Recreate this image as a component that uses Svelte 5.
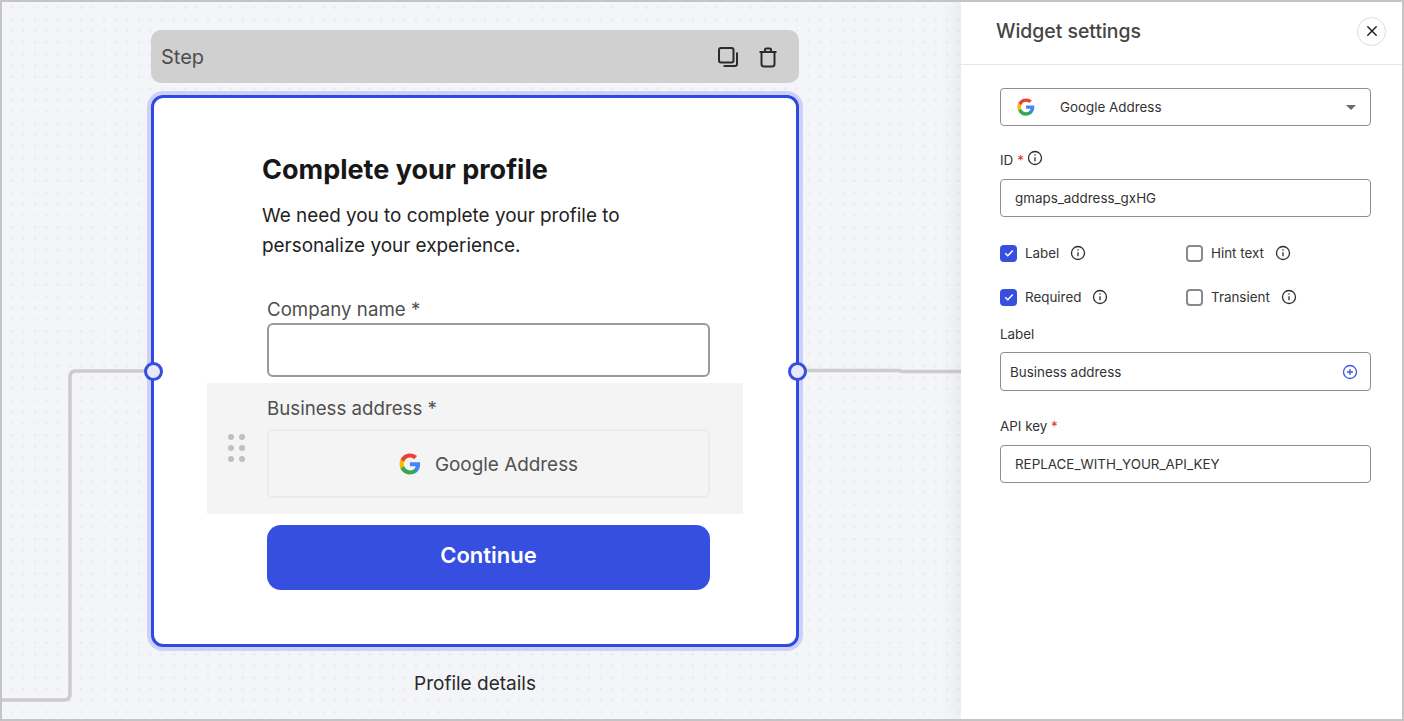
<script lang="ts">
  const checks = [
    { label: 'Label', on: true },
    { label: 'Hint text', on: false },
    { label: 'Required', on: true },
    { label: 'Transient', on: false }
  ];
</script>

{#snippet gLogo(size)}
  <svg class="g" width={size} height={size} viewBox="0 0 48 48">
    <path fill="#4285F4" d="M46.100 24.500c0-1.600-.1-3.100-.4-4.500H24v8.900h12.400c-.5 2.900-2.200 5.300-4.600 6.900v5.700h7.400c4.300-4 6.900-9.900 6.900-17z"/>
    <path fill="#34A853" d="M24 47c6.200 0 11.400-2 15.200-5.500l-7.400-5.700c-2 1.400-4.700 2.200-7.800 2.200-6 0-11.100-4-12.900-9.500H3.500v5.900C7.300 41.900 15 47 24 47z"/>
    <path fill="#FBBC05" d="M11.100 28.500c-.5-1.400-.7-2.900-.7-4.500s.3-3.100.7-4.500v-5.900H3.500C2 16.700 1 20.200 1 24s.9 7.300 2.500 10.400l7.600-5.900z"/>
    <path fill="#EA4335" d="M24 10c3.400 0 6.400 1.200 8.800 3.400l6.600-6.600C35.400 3.100 30.200 1 24 1 15 1 7.300 6.100 3.500 13.600l7.600 5.900C12.900 14 18 10 24 10z"/>
  </svg>
{/snippet}

{#snippet info()}
  <svg class="info" width="16" height="16" viewBox="0 0 16 16" fill="none" stroke="#2e2e2e" stroke-width="1.300">
    <circle cx="8" cy="8" r="6.500"/>
    <path d="M8 7.300v4"/>
    <circle cx="8" cy="5" r=".8" fill="#2e2e2e" stroke="none"/>
  </svg>
{/snippet}

<div class="frame">
  <main class="canvas">
    <svg class="wires" width="960" height="717" fill="none" stroke="#cccccc" stroke-width="3.500">
      <path d="M0 698H62q6 0 6-6V375q0-6 6-6H150"/>
      <path d="M800 368.500H897L900 369.500H960"/>
    </svg>

    <section class="node">
      <header class="step">
        <span>Step</span>
        <div class="step-tools">
          <svg width="24" height="24" viewBox="0 0 24 24" fill="none" stroke="#2b2b2b" stroke-width="2">
            <rect x="3" y="3" width="14.500" height="14.500" rx="2"/>
            <path d="M21 7.500V19q0 2-2 2H7.500" />
          </svg>
          <svg width="24" height="24" viewBox="0 0 24 24" fill="none" stroke="#2b2b2b" stroke-width="2">
            <path d="M3.500 7h17M9 6.500V4.500q0-1 1-1h4q1 0 1 1v2M5.500 7v12q0 2.500 2.500 2.500h8q2.500 0 2.500-2.500V7" />
          </svg>
        </div>
      </header>

      <div class="card">
        <div class="intro">
          <h1>Complete your profile</h1>
          <p>We need you to complete your profile to personalize your experience.</p>
        </div>

        <div class="field">
          <div class="field-label">Company name *</div>
          <div class="text-input"></div>
        </div>

        <div class="widget">
          <div class="grip">
            {#each Array(6) as _}<i></i>{/each}
          </div>
          <div class="field-label">Business address *</div>
          <div class="address">
            {@render gLogo(22)}
            <span>Google Address</span>
          </div>
        </div>

        <button class="continue">Continue</button>
      </div>

      <span class="handle left"></span>
      <span class="handle right"></span>

      <div class="node-name">Profile details</div>
    </section>
  </main>

  <aside class="panel">
    <header class="panel-head">
      <h2>Widget settings</h2>
      <button class="close" aria-label="Close">
        <svg width="12" height="12" viewBox="0 0 12 12" stroke="#222" stroke-width="1.500" stroke-linecap="round">
          <path d="M1.800 1.800l8.400 8.400M10.200 1.800l-8.400 8.400"/>
        </svg>
      </button>
    </header>

    <div class="panel-body">
      <div class="box select">
        {@render gLogo(18)}
        <span>Google Address</span>
        <i class="caret"></i>
      </div>

      <div class="label id-label">ID <em>*</em> {@render info()}</div>
      <div class="box pad15">gmaps_address_gxHG</div>

      <div class="checks">
        {#each checks as c}
          <div class="check">
            {#if c.on}
              <span class="tick on">
                <svg width="12" height="12" viewBox="0 0 12 12" fill="none" stroke="#fff" stroke-width="1.500"><path d="M2.200 6.300l2.600 2.500 5-5.400"/></svg>
              </span>
            {:else}
              <span class="tick"></span>
            {/if}
            <span class="check-text">{c.label}</span>
            {@render info()}
          </div>
        {/each}
      </div>

      <div class="label plain-label">Label</div>
      <div class="box biz">
        <span>Business address</span>
        <svg width="16" height="16" viewBox="0 0 16 16" fill="none" stroke="#3a55e0" stroke-width="1.300">
          <circle cx="8" cy="8" r="6.500"/>
          <path d="M8 5v6M5 8h6"/>
        </svg>
      </div>

      <div class="label api-label">API key <em>*</em></div>
      <div class="box pad15">REPLACE_WITH_YOUR_API_KEY</div>
    </div>
  </aside>
</div>

<style>
  :global(body) {
    margin: 0;
    font-family: Inter, "Liberation Sans", sans-serif;
  }
  .frame {
    display: flex;
    box-sizing: border-box;
    width: 1404px;
    height: 721px;
    border: 2px solid #c4c4c4;
    overflow: hidden;
    background: #fff;
  }
  .canvas {
    position: relative;
    flex: 1;
    background-color: #f4f5f8;
    background-image: radial-gradient(circle, #eaebee 1.1px, transparent 1.7px);
    background-size: 11.55px 11.55px;
    background-position: 4px 0;
  }
  .wires {
    position: absolute;
    left: 0;
    top: 0;
  }
  .node {
    position: absolute;
    left: 149px;
    top: 28px;
    width: 648px;
  }
  .step {
    display: flex;
    align-items: center;
    justify-content: space-between;
    box-sizing: border-box;
    height: 53px;
    padding: 0 19px 0 10px;
    border-radius: 10px;
    background: #d0d0d0;
    color: #4d4d4d;
    font-size: 20px;
  }
  .step-tools {
    display: flex;
    gap: 16px;
  }
  .card {
    box-sizing: border-box;
    height: 552px;
    margin-top: 12px;
    padding: 55px 86px 0 108px;
    background: #fff;
    border: 3px solid #3049e0;
    border-radius: 12px;
    box-shadow: 0 0 0 4px #cdd0fb;
  }
  .intro h1 {
    margin: 0;
    font-size: 27px;
    line-height: 34px;
    font-weight: 700;
    color: #171717;
  }
  .intro p {
    margin: 14px 0 0;
    width: 400px;
    font-size: 18.900px;
    line-height: 30px;
    color: #222;
  }
  .field {
    margin: 37px 0 0 5px;
  }
  .field-label {
    font-size: 18.700px;
    line-height: 24px;
    color: #4f4f4f;
  }
  .text-input {
    box-sizing: border-box;
    height: 54px;
    margin-top: 1px;
    border: 2px solid #9a9a9a;
    border-radius: 6px;
  }
  .widget {
    position: relative;
    box-sizing: border-box;
    height: 131px;
    margin: 6px -33px 0 -55px;
    padding: 14px 33px 0 60px;
    background: #f4f4f4;
  }
  .grip {
    position: absolute;
    left: 21px;
    top: 51px;
    display: grid;
    grid-template-columns: 6px 6px;
    gap: 5px;
  }
  .grip i {
    width: 6px;
    height: 6px;
    border-radius: 50%;
    background: #bfc0c5;
  }
  .address {
    display: flex;
    align-items: center;
    justify-content: center;
    gap: 14px;
    box-sizing: border-box;
    height: 69px;
    margin-top: 8px;
    border: 2px solid #ebebeb;
    border-radius: 6px;
    color: #525252;
    font-size: 18.900px;
  }
  .address span {
    margin-top: 2px;
  }
  .continue {
    display: block;
    width: 443px;
    height: 65px;
    margin: 11px 0 0 5px;
    padding: 0 0 6px;
    border: 0;
    border-radius: 14px;
    background: #364fe0;
    color: #fff;
    font: 600 22px Inter, "Liberation Sans", sans-serif;
  }
  .handle {
    position: absolute;
    top: 332px;
    box-sizing: border-box;
    width: 19px;
    height: 19px;
    border: 3px solid #364fe0;
    border-radius: 50%;
    background: #e8eafb;
  }
  .handle.left { left: -7px; }
  .handle.right { right: -8px; }
  .node-name {
    margin-top: 25px;
    text-align: center;
    font-size: 19px;
    line-height: 24px;
    color: #2a2a2a;
  }
  .panel {
    box-sizing: border-box;
    width: 441px;
    flex: none;
    background: #fff;
    box-shadow: -8px 0 16px rgba(0, 0, 0, 0.045);
    position: relative;
  }
  .panel-head {
    display: flex;
    align-items: center;
    justify-content: space-between;
    box-sizing: border-box;
    height: 63px;
    padding: 0 16px 4px 35px;
    border-bottom: 1px solid #e6e6e6;
  }
  .panel-head h2 {
    margin: 0;
    font-size: 19.400px;
    font-weight: 500;
    color: #454545;
  }
  .close {
    display: flex;
    align-items: center;
    justify-content: center;
    box-sizing: border-box;
    width: 29px;
    height: 29px;
    padding: 0;
    border: 1px solid #dcdcdc;
    border-radius: 50%;
    background: #fff;
  }
  .panel-body {
    padding: 23px 31px 0 39px;
    font-size: 13.400px;
    color: #333;
  }
  .box {
    box-sizing: border-box;
    display: flex;
    align-items: center;
    height: 38px;
    border: 1px solid #8e8e8e;
    border-radius: 4px;
    color: #333;
    font-size: 13.400px;
  }
  .pad15 { padding-left: 14px; }
  .select { padding: 0 14px 0 16px; }
  .select span { margin-left: 25px; }
  .caret {
    margin-left: auto;
    width: 0;
    height: 0;
    border-left: 5.500px solid transparent;
    border-right: 5.500px solid transparent;
    border-top: 5px solid #6a6a6a;
  }
  .label {
    font-size: 13.400px;
    line-height: 18px;
    color: #333;
  }
  .label em {
    font-style: normal;
    color: #d33;
  }
  .id-label {
    display: flex;
    align-items: flex-start;
    gap: 4px;
    height: 18px;
    margin: 25px 0 10px;
  }
  .id-label .info { margin-top: -1px; margin-left: -1px; }
  .checks {
    display: grid;
    grid-template-columns: 186px 1fr;
    row-gap: 26px;
    margin-top: 27px;
  }
  .check {
    display: flex;
    align-items: center;
    height: 18px;
  }
  .tick {
    box-sizing: border-box;
    display: flex;
    align-items: center;
    justify-content: center;
    width: 17px;
    height: 17px;
    border: 2px solid #8a8a8a;
    border-radius: 4px;
  }
  .tick.on {
    border: 0;
    background: #364fe0;
  }
  .check-text { margin: 0 11px 0 8px; }
  .plain-label { margin: 19px 0 9px; }
  .biz {
    height: 39px;
    justify-content: space-between;
    padding: 0 12px 0 9px;
  }
  .api-label { margin: 26px 0 10px; }
</style>
